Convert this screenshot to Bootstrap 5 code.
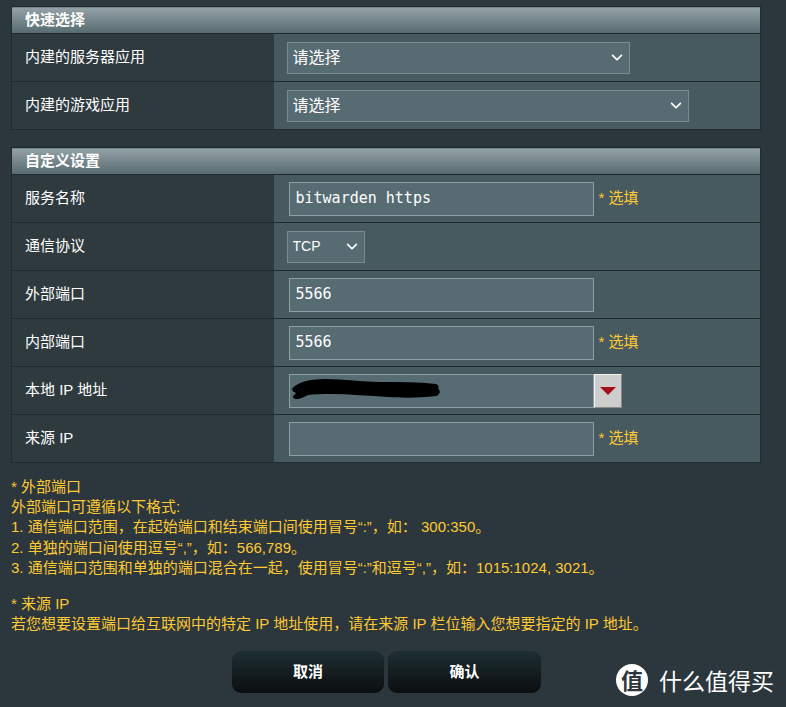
<!DOCTYPE html>
<html lang="zh-CN">
<head>
    <meta charset="UTF-8">
    <meta name="viewport" content="width=device-width, initial-scale=1.0">
    <title>端口转发</title>
    <link href="https://cdn.jsdelivr.net/npm/bootstrap@5.3.3/dist/css/bootstrap.min.css" rel="stylesheet">
    <style>
        html, body { height: 707px; overflow: hidden; }
        body {
            background: #2b373c;
            color: #fff;
            font-family: "Liberation Sans", "Noto Sans CJK SC", sans-serif;
            font-size: 15px;
            padding: 6px 25px 0 11px;
            position: relative;
        }
        .set-table {
            --bs-table-bg: transparent;
            --bs-table-color: #fff;
            --bs-table-border-color: #20292c;
            width: 750px;
            border: 1px solid #20292c;
            margin-bottom: 17px;
            table-layout: fixed;
        }
        .col-label { width: 262px; }
        .set-table th.head-cell {
            height: 27px;
            padding: 0 13px;
            background: linear-gradient(#94a2a6, #566a70);
            color: #fff;
            font-size: 15px;
            font-weight: 700;
            line-height: 26px;
            vertical-align: middle;
        }
        .set-table td {
            height: 48px;
            padding: 0;
            vertical-align: middle;
        }
        .set-table td.label-cell {
            padding-left: 13px;
            background: #2f3a3f;
            font-size: 15px;
        }
        .set-table td.value-cell { background: #475a5f; padding-left: 13px; }
        .set-table td.input-cell { padding-left: 15px; }
        .dark-select.form-select {
            height: 32px;
            padding: 0 0 0 5px;
            border: 1px solid #7d8a8e;
            border-radius: 0;
            background-color: #576c72;
            background-image: url("data:image/svg+xml,%3csvg xmlns='http://www.w3.org/2000/svg' viewBox='0 0 16 16'%3e%3cpath fill='none' stroke='%23ffffff' stroke-linecap='round' stroke-linejoin='round' stroke-width='2' d='m3 5 5 5 5-5'/%3e%3c/svg%3e");
            background-position: right 5px center;
            background-size: 14px 14px;
            color: #fff;
            font-size: 16px;
        }
        .sel-wide { width: 343px; }
        .sel-wider { width: 402px; }
        .sel-proto { width: 78px; font-size: 14px !important; }
        .dark-input.form-control {
            width: 305px;
            height: 34px;
            padding: 0 6px 2px;
            border: 1px solid #8e9fa3;
            border-radius: 0;
            background: #576c72;
            color: #fff;
            font-family: "DejaVu Sans Mono", monospace;
            font-size: 15px;
        }
        .opt-note { color: #ffc933; font-size: 15px; margin-left: 5px; }
        .drop-btn {
            width: 28px;
            height: 34px;
            background: #cdcdcd;
            border: 1px solid;
            border-color: #f4f4f4 #8a8a8a #8a8a8a #f4f4f4;
        }
        .ip-box { position: relative; }
        .ip-scribble { position: absolute; left: 1px; top: 4px; }
        .notes {
            color: #ffc933;
            font-size: 15px;
            line-height: 20.2px;
            padding-top: 14px;
        }
        .notes p { margin: 0 0 16px; }
        .act-btn.btn {
            width: 152px;
            height: 42px;
            padding: 0;
            border: 0;
            border-radius: 9px;
            background: linear-gradient(#1d2e32, #0c0e0f);
            color: #fff;
            font-size: 15px;
            font-weight: 700;
        }
        .act-row { margin: 17px 0 0 221px; gap: 4px; }
        .act-row .act-btn:last-child { width: 153px; }
        .watermark {
            position: absolute;
            left: 616px;
            top: 664px;
            gap: 11px;
            color: #fff;
            font-family: "Noto Sans CJK SC", sans-serif;
            font-size: 23px;
            line-height: 32px;
        }
        .wm-circle {
            width: 32px;
            height: 32px;
            border-radius: 50%;
            background: #fff;
            color: #2b373c;
            font-size: 22px;
            font-weight: 700;
            line-height: 31px;
            text-align: center;
        }
    </style>
</head>

<body>
    <table class="table set-table">
        <colgroup><col class="col-label"><col></colgroup>
        <thead>
            <tr><th colspan="2" class="head-cell">快速选择</th></tr>
        </thead>
        <tbody>
            <tr>
                <td class="label-cell">内建的服务器应用</td>
                <td class="value-cell">
                    <select class="form-select dark-select sel-wide"><option>请选择</option></select>
                </td>
            </tr>
            <tr>
                <td class="label-cell">内建的游戏应用</td>
                <td class="value-cell">
                    <select class="form-select dark-select sel-wider"><option>请选择</option></select>
                </td>
            </tr>
        </tbody>
    </table>

    <table class="table set-table mb-0">
        <colgroup><col class="col-label"><col></colgroup>
        <thead>
            <tr><th colspan="2" class="head-cell">自定义设置</th></tr>
        </thead>
        <tbody>
            <tr>
                <td class="label-cell">服务名称</td>
                <td class="value-cell input-cell">
                    <div class="d-flex align-items-center">
                        <input class="form-control dark-input" type="text" value="bitwarden https">
                        <span class="opt-note">* 选填</span>
                    </div>
                </td>
            </tr>
            <tr>
                <td class="label-cell">通信协议</td>
                <td class="value-cell">
                    <select class="form-select dark-select sel-proto"><option>TCP</option></select>
                </td>
            </tr>
            <tr>
                <td class="label-cell">外部端口</td>
                <td class="value-cell input-cell">
                    <input class="form-control dark-input" type="text" value="5566">
                </td>
            </tr>
            <tr>
                <td class="label-cell">内部端口</td>
                <td class="value-cell input-cell">
                    <div class="d-flex align-items-center">
                        <input class="form-control dark-input" type="text" value="5566">
                        <span class="opt-note">* 选填</span>
                    </div>
                </td>
            </tr>
            <tr>
                <td class="label-cell">本地 IP 地址</td>
                <td class="value-cell input-cell">
                    <div class="d-flex align-items-center">
                        <div class="ip-box">
                            <input class="form-control dark-input" type="text">
                            <!-- blacked out address -->
                            <svg class="ip-scribble" width="152" height="24" viewBox="0 0 152 24">
                                <path fill="#000" d="M2 11C6 5 18 1 35 1C55 1 72 4 90 4C110 4 128 4 146 6C149 7 149 9 148 10C151 13 150 17 146 18C130 20 112 20 98 19C80 18 60 16 40 16C32 16 24 16 18 17C14 19 10 21 7 21C3 21 2 19 4 17C5 16 6 15 6 15C4 14 2 13 2 11Z"/>
                            </svg>
                        </div>
                        <div class="drop-btn d-flex align-items-center justify-content-center">
                            <svg width="16" height="10" viewBox="0 0 16 10"><path fill="#a50f1a" d="M0 1h16L8 9z"/></svg>
                        </div>
                    </div>
                </td>
            </tr>
            <tr>
                <td class="label-cell">来源 IP</td>
                <td class="value-cell input-cell">
                    <div class="d-flex align-items-center">
                        <input class="form-control dark-input" type="text">
                        <span class="opt-note">* 选填</span>
                    </div>
                </td>
            </tr>
        </tbody>
    </table>

    <div class="notes">
        <p>
            * 外部端口<br>
            外部端口可遵循以下格式:<br>
            1. 通信端口范围，在起始端口和结束端口间使用冒号“:”，如： 300:350。<br>
            2. 单独的端口间使用逗号“,”，如：566,789。<br>
            3. 通信端口范围和单独的端口混合在一起，使用冒号“:”和逗号“,”，如：1015:1024, 3021。
        </p>
        <p>
            * 来源 IP<br>
            若您想要设置端口给互联网中的特定 IP 地址使用，请在来源 IP 栏位输入您想要指定的 IP 地址。
        </p>
    </div>

    <div class="d-flex act-row">
        <button class="btn act-btn" type="button">取消</button>
        <button class="btn act-btn" type="button">确认</button>
    </div>

    <div class="watermark d-flex">
        <div class="wm-circle">值</div>
        <div>什么值得买</div>
    </div>
</body>
</html>
